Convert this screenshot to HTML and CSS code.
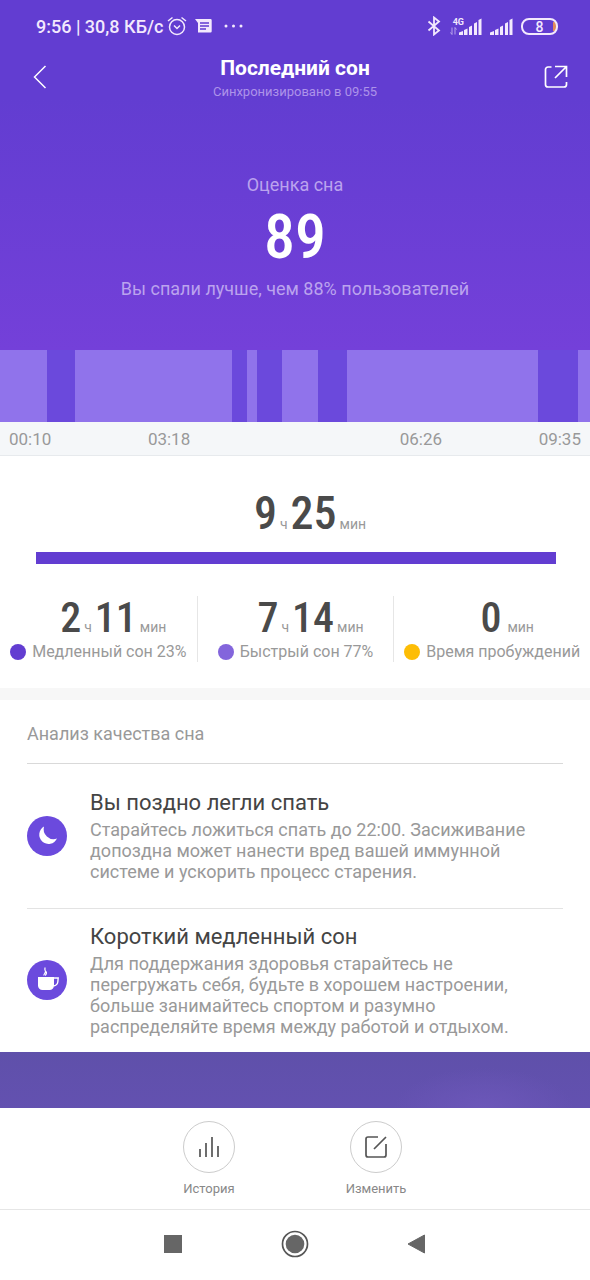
FILE: index.html
```html
<!DOCTYPE html>
<html lang="ru">
<head>
<meta charset="utf-8">
<meta name="viewport" content="width=device-width, initial-scale=1">
<title>Последний сон</title>
<link rel="stylesheet" href="styles.css">
</head>
<body>
<div class="app">
  <section class="hero">
    <div class="status">
      <div class="status-group">
        <span>9:56 | 30,8 КБ/с</span>
        <svg width="20" height="20" viewBox="0 0 20 20" fill="none" stroke="currentColor" stroke-width="1.5"><circle cx="10" cy="11" r="7.5"/><path d="M1 5 5.5 1.5M19 5 14.5 1.5M7 9.500l3 3 3-3"/></svg>
        <svg class="note" width="17" height="14" viewBox="0 0 17 14"><path fill="currentColor" d="M0 0h15.500a1.200 1.200 0 0 1 1.200 1.200v11a1.200 1.200 0 0 1-1.200 1.200H3V4z"/><path stroke="#623dd1" stroke-width="1.500" d="M5 4h9M5 7h9M5 10h6"/></svg>
        <svg class="dots" width="19" height="4" viewBox="0 0 19 4" fill="currentColor"><circle cx="2" cy="2" r="1.500"/><circle cx="9.500" cy="2" r="1.500"/><circle cx="17" cy="2" r="1.500"/></svg>
      </div>
      <div class="status-group">
        <svg width="14" height="20" viewBox="0 0 14 20" fill="none" stroke="currentColor" stroke-width="1.800"><path d="M1.500 5.500 12 14.500 7 18.500V1.500L12 5.500 1.500 14.500"/></svg>
        <span class="mobile">
          <span class="net"><small>4G</small><svg width="7" height="8" viewBox="0 0 7 8" fill="none" stroke="currentColor" stroke-width="1" opacity=".6"><path d="M2 .5v7L.5 5.500M5 7.500v-7L6.500 2.500"/></svg></span>
          <svg width="23" height="17" viewBox="0 0 23 17" fill="currentColor"><path d="M0 17v-2.500l4-1.500v4zM5 12l3.500-1.500V17H5zM10 9l3-1.500V17h-3zM15 5.500l3-1.500v13h-3zM19.500 2l3-1.500V17h-3z"/></svg>
        </span>
        <svg width="23" height="17" viewBox="0 0 23 17" fill="currentColor"><path d="M0 17v-2.500l4-1.500v4zM5 12l3.500-1.500V17H5zM10 9l3-1.500V17h-3zM15 5.500l3-1.500v13h-3zM19.500 2l3-1.500V17h-3z"/></svg>
        <span class="battery">8</span>
      </div>
    </div>
    <header class="header">
      <button class="icon-button" aria-label="Назад"><svg width="14" height="24" viewBox="0 0 14 24" fill="none" stroke="currentColor" stroke-width="1.500"><path d="M12.500 1 1.500 12l11 11"/></svg></button>
      <div class="heading">
        <h1>Последний сон</h1>
        <p>Синхронизировано в 09:55</p>
      </div>
      <button class="icon-button share" aria-label="Поделиться"><svg width="24" height="24" viewBox="0 0 24 24" fill="none" stroke="currentColor" stroke-width="1.700"><path d="M7.500 2H4a2.500 2.500 0 0 0-2.500 2.500v15A2.500 2.500 0 0 0 4 22h16a2.500 2.500 0 0 0 2.500-2.500V17M11 1.500h11.500V12M22 2 11 13"/></svg></button>
    </header>
    <div class="score">
      <p>Оценка сна</p>
      <strong>89</strong>
      <p>Вы спали лучше, чем 88% пользователей</p>
    </div>
  </section>

  <div class="phases" role="img" aria-label="Фазы сна">
    <i style="flex-grow:47"></i><i class="deep" style="flex-grow:28"></i><i style="flex-grow:157"></i><i class="deep" style="flex-grow:15"></i><i style="flex-grow:10"></i><i class="deep" style="flex-grow:25"></i><i style="flex-grow:36"></i><i class="deep" style="flex-grow:29"></i><i style="flex-grow:191"></i><i class="deep" style="flex-grow:40"></i><i style="flex-grow:12"></i>
  </div>
  <div class="times"><span>00:10</span><span>03:18</span><span>06:26</span><span>09:35</span></div>

  <section class="summary">
    <p class="duration total"><b>9</b><small>ч</small><b>25</b><small>мин</small></p>
    <div class="bar"></div>
    <div class="stats">
      <div class="stat">
        <p class="duration"><b>2</b><small>ч</small><b>11</b><small>мин</small></p>
        <p class="legend"><i class="dot slow"></i>Медленный сон 23%</p>
      </div>
      <div class="stat">
        <p class="duration"><b>7</b><small>ч</small><b>14</b><small>мин</small></p>
        <p class="legend"><i class="dot fast"></i>Быстрый сон 77%</p>
      </div>
      <div class="stat">
        <p class="duration"><b>0</b><small class="wide">мин</small></p>
        <p class="legend"><i class="dot awake"></i>Время пробуждений</p>
      </div>
    </div>
  </section>

  <section class="analysis">
    <h2>Анализ качества сна</h2>
    <article class="tip">
      <svg class="badge" width="40" height="40" viewBox="0 0 40 40"><circle cx="20" cy="20" r="20" fill="#6b4add"/><path fill="#fff" d="M17 10.500A9.300 9.300 0 1 0 30 22.500 10 10 0 0 1 17 10.500z"/></svg>
      <div>
        <h3>Вы поздно легли спать</h3>
        <p>Старайтесь ложиться спать до 22:00. Засиживание допоздна может нанести вред вашей иммунной системе и ускорить процесс старения.</p>
      </div>
    </article>
    <article class="tip">
      <svg class="badge" width="40" height="40" viewBox="0 0 40 40"><circle cx="20" cy="20" r="20" fill="#6b4add"/><path fill="#fff" d="M11 17h16v8.500a4.500 4.500 0 0 1-4.500 4.500h-7a4.500 4.500 0 0 1-4.500-4.500z"/><path fill="none" stroke="#fff" stroke-width="1.400" d="M26.500 18h4.700l-.4 4c-.3 2.300-1.500 3.500-4.300 4"/><path fill="none" stroke="#fff" stroke-width="1.200" d="M17 15.500c-.5-2 1.800-2.300 1.500-4-.2-1.200-1.300-2-.3-4M18.200 15.500c1.600-1.700 2-2.500.6-4"/></svg>
      <div>
        <h3>Короткий медленный сон</h3>
        <p>Для поддержания здоровья старайтесь не перегружать себя, будьте в хорошем настроении, больше занимайтесь спортом и разумно распределяйте время между работой и отдыхом.</p>
      </div>
    </article>
  </section>

  <div class="banner"></div>

  <nav class="actions">
    <button class="action"><span class="ring"><svg width="24" height="24" viewBox="0 0 24 24" fill="none" stroke="#555" stroke-width="1.700"><path d="M3 14v8M9 8v14M15 2v20M21 11v11"/></svg></span>История</button>
    <button class="action"><span class="ring"><svg width="24" height="24" viewBox="0 0 24 24" fill="none" stroke="#555" stroke-width="1.700"><path d="M14 2H4a2 2 0 0 0-2 2v16a2 2 0 0 0 2 2h16a2 2 0 0 0 2-2V9M22 2 10 14"/></svg></span>Изменить</button>
  </nav>
  <nav class="system">
    <button aria-label="Недавние"><svg width="28" height="28" viewBox="0 0 28 28" fill="#666"><path d="M5 5h18v18H5z"/></svg></button>
    <button aria-label="Домой"><svg width="28" height="28" viewBox="0 0 28 28"><circle cx="14" cy="14" r="12.500" fill="none" stroke="#555" stroke-width="1.700"/><circle cx="14" cy="14" r="9.300" fill="#666"/></svg></button>
    <button aria-label="Назад"><svg width="28" height="28" viewBox="0 0 28 28"><path fill="#666" stroke="#666" stroke-width="1" stroke-linejoin="round" d="M5 14 21.500 5v18z"/></svg></button>
  </nav>
</div>
</body>
</html>
```
FILE: styles.css
```css
* { box-sizing: border-box; margin: 0; padding: 0; }
body { background: #fff; color: #444; font-family: Roboto, "Noto Sans", sans-serif; }
button { border: 0; background: none; color: inherit; font: inherit; cursor: pointer; }
svg { display: block; flex: none; }
h1, h2, h3 { font-weight: 400; }

.app { display: flex; flex-direction: column; min-height: 100vh; }

.hero { padding-bottom: 50px; background: linear-gradient(#623dd1 28%, #7440d9); color: #fff; }
.status { display: flex; justify-content: space-between; height: 52px; padding: 0 32px 0 36px; color: #f3e9fd; font-size: 18px; font-weight: 500; }
.status-group { display: flex; align-items: center; gap: 8px; }
.status-group > span:first-child { margin-right: -4px; }
.dots { margin-left: 4px; }
.mobile { display: flex; align-items: flex-end; margin-left: 2px; }
.net { display: flex; flex-direction: column; margin-right: -5px; }
.net small { margin-left: 2px; font-size: 9px; line-height: 9px; font-weight: 700; }
.net svg { margin-left: -1px; }
.battery { width: 37px; height: 17px; border: 2px solid; border-radius: 8px; background: linear-gradient(#e08a5c, #e08a5c) right / 3px 9px no-repeat; font-size: 14px; line-height: 14px; text-align: center; }

.header { display: flex; justify-content: space-between; align-items: flex-start; padding: 2px 20px 0; }
.icon-button { display: flex; width: 40px; padding: 11px 2px 10px 13px; }
.share { justify-content: flex-end; }
.heading { text-align: center; }
.heading h1 { font-size: 21px; line-height: 28px; font-weight: 700; }
.heading p { color: #ad93e9; font-size: 13px; line-height: 19px; }

.score { display: flex; flex-direction: column; align-items: center; padding-top: 73px; color: #bba3ee; font-size: 18px; line-height: 22px; }
.score strong { margin: 6px 0; color: #fff; font-size: 62px; line-height: 70px; }
.score strong, .duration b { font-family: "Roboto Condensed", Roboto, sans-serif; font-weight: 500; }

.phases { display: flex; height: 72px; background: #9073eb; }
.phases i { flex: 0 1 0; }
.phases .deep { background: #6b49dc; }
.times { display: flex; justify-content: space-between; padding: 1px 9px 0; border-bottom: 1px solid #e7eaed; background: #f5f7f9; color: #999; font-size: 17px; line-height: 32px; }
.times span { padding-top: 1px; line-height: 31px; }
.times span:nth-child(2) { margin-right: 113px; }

.summary { padding: 32px 0 26px; border-bottom: 12px solid #f7f7f7; }
.duration { display: flex; justify-content: center; align-items: baseline; gap: 3px; padding-left: 30px; color: #4a4a4a; font-size: 42px; line-height: 44px; }
.duration small { color: #999; font-size: 14px; line-height: 16px; }
.duration .wide { margin-left: 3px; }
.total { font-size: 46px; line-height: 50px; }
.bar { height: 12px; margin: 14px 34px 32px 36px; background: #623dd1; }
.stats { display: grid; grid-template-columns: repeat(3, 1fr); }
.stat + .stat { border-left: 1px solid #e6e6e6; }
.legend { display: flex; justify-content: center; align-items: center; gap: 6px; padding-top: 2px; color: #999; font-size: 16px; line-height: 20px; white-space: nowrap; }
.dot { flex: none; width: 16px; height: 16px; border-radius: 50%; }
.slow { background: #623dd1; }
.fast { background: #8365dc; }
.awake { background: #fdbd05; }

.analysis { padding: 0 27px; }
.analysis h2 { padding: 23px 0 18px; border-bottom: 1px solid #d9d9d9; color: #999; font-size: 18px; line-height: 22px; }
.tip { display: flex; align-items: center; gap: 23px; min-height: 144px; padding-bottom: 1px; color: #999; font-size: 18px; line-height: 21px; }
.tip + .tip { border-top: 1px solid #e3e3e3; }
.tip h3 { margin-bottom: 2px; color: #444; font-size: 22px; line-height: 28px; }

.banner { flex: 1 0 56px; background: radial-gradient(90px 40px at 82% 100%, #6c57b9, transparent), linear-gradient(#5f50aa, #6351b0); }

.actions { display: flex; justify-content: center; gap: 87px; padding: 13px 5px 12px 0; border-bottom: 1px solid #e6e6e6; }
.action { display: flex; flex-direction: column; align-items: center; gap: 7px; width: 80px; color: #888; font-size: 13px; line-height: 17px; }
.ring { display: grid; place-items: center; width: 52px; height: 52px; border: 1px solid #ccc; border-radius: 50%; }
.system { display: flex; justify-content: center; gap: 94px; padding: 20px 0 22px; }
```
